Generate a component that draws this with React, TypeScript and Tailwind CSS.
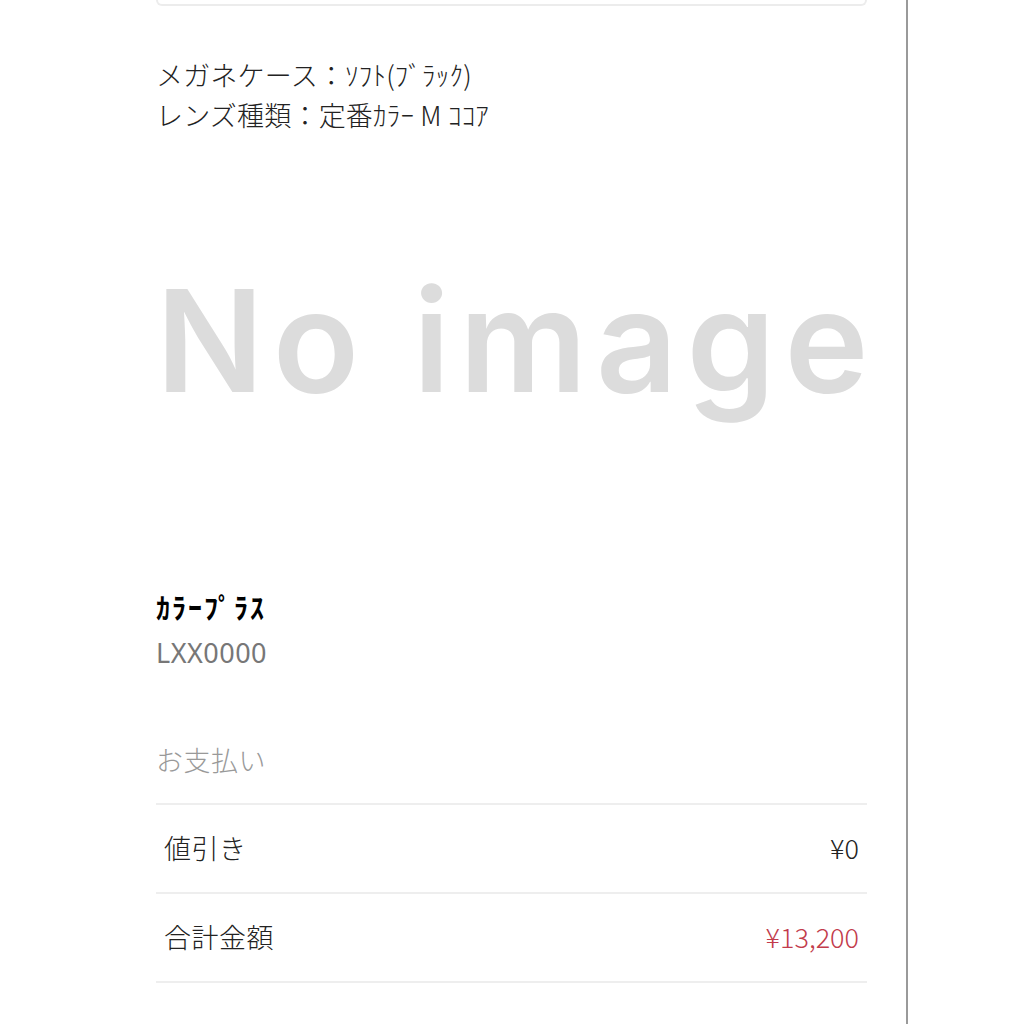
import React from 'react'

const jp = { fontFamily: '"Noto Sans CJK JP", "Noto Sans", sans-serif' }

function Row({ label, value, accent = false }: { label: string; value: string; accent?: boolean }) {
  return (
    <div className="flex h-[89px] items-center justify-between border-t-2 border-[#eeeeee] px-2">
      <span className="text-[27px] font-light tracking-[0.5px] text-[#222]">{label}</span>
      <span className={`text-[27px] font-light ${accent ? 'text-[#c23b4b]' : 'text-[#222]'}`}>{value}</span>
    </div>
  )
}

export default function App() {
  return (
    <div className="flex min-h-[1024px] w-[1024px] bg-white" style={jp}>
      <div className="w-[906px] pl-[156px] pr-[39px]">
        {/* previous card, only its bottom edge shows */}
        <div className="h-[6px] rounded-b-[14px] border-x-2 border-b-2 border-[#ececec]" />

        <div className="mt-[49px] text-[27px] font-light leading-[40px] tracking-[0.2px] text-[#222]">
          <p>メガネケース：ｿﾌﾄ(ﾌﾞﾗｯｸ)</p>
          <p>レンズ種類：定番ｶﾗｰ M ｺｺｱ</p>
        </div>

        {/* placeholder picture */}
        <div className="flex h-[450px] items-center pb-[40px]">
          <span
            className="whitespace-nowrap text-[142px] font-semibold leading-none tracking-[9px] text-[#dcdcdc]"
            style={{ fontFamily: 'Inter, sans-serif' }}
          >
            No image
          </span>
        </div>

        <div className="leading-[45px]">
          <p className="text-[28px] font-bold tracking-[2px] text-black">ｶﾗｰﾌﾟﾗｽ</p>
          <p className="text-[27px] tracking-[0.5px] text-[#777]" style={{ fontFamily: '"Noto Sans", sans-serif' }}>LXX0000</p>
        </div>

        <p className="mt-[65px] text-[27px] font-light leading-[40px] tracking-[0.5px] text-[#999]">お支払い</p>

        <div className="mt-[23px]">
          <Row label="値引き" value="¥0" />
          <Row label="合計金額" value="¥13,200" accent />
          <div className="border-t-2 border-[#eeeeee]" />
        </div>
      </div>
      <div className="w-[2px] bg-[#9a9a9a]" />
      <div className="flex-1" />
    </div>
  )
}
